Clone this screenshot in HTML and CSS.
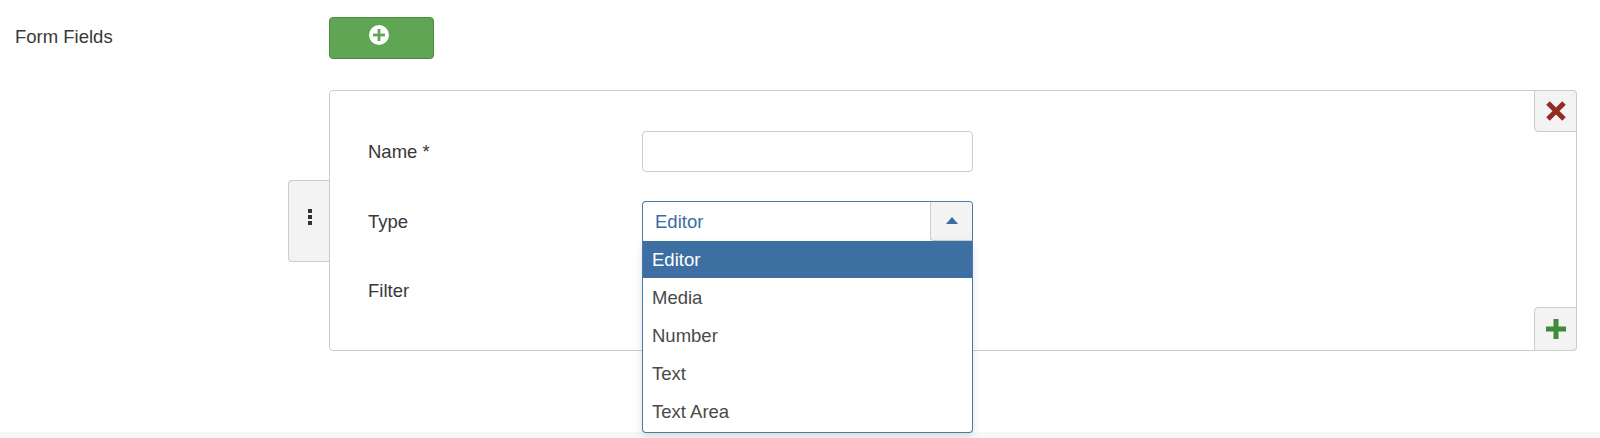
FILE: index.html
```html
<!DOCTYPE html>
<html lang="en">
<head>
<meta charset="utf-8">
<title>Form Fields</title>
<link rel="stylesheet" href="styles.css">
</head>
<body>
<div class="page">
  <div class="top-row">
    <div class="top-label">Form Fields</div>
    <button class="btn-add" type="button" aria-label="Add">
      <svg width="20" height="20" viewBox="0 0 20 20">
        <circle cx="10" cy="10" r="10" fill="#ffffff"/>
        <rect x="8.6" y="4" width="2.8" height="12" fill="#5fa553"/>
        <rect x="4" y="8.6" width="12" height="2.8" fill="#5fa553"/>
      </svg>
    </button>
  </div>

  <div class="card">
    <div class="handle">
      <span class="dots"><i></i><i></i><i></i></span>
    </div>

    <div class="form-row">
      <div class="form-label">Name *</div>
      <div class="control"><div class="input"></div></div>
    </div>

    <div class="form-row">
      <div class="form-label">Type</div>
      <div class="control">
        <div class="select">
          <span class="select-value">Editor</span>
          <span class="select-toggle">
            <svg width="12" height="7" viewBox="0 0 12 7"><polygon points="0,7 6,0 12,7" fill="#3b6ca4"/></svg>
          </span>
          <ul class="dropdown">
            <li class="active">Editor</li>
            <li>Media</li>
            <li>Number</li>
            <li>Text</li>
            <li>Text Area</li>
          </ul>
        </div>
      </div>
    </div>

    <div class="form-row">
      <div class="form-label">Filter</div>
      <div class="control"></div>
    </div>

    <button class="corner-btn close-btn" type="button" aria-label="Remove">
      <svg width="22" height="22" viewBox="0 0 22 22">
        <path d="M3 3 L19 19 M19 3 L3 19" stroke="#942a25" stroke-width="5" stroke-linecap="butt"/>
      </svg>
    </button>
    <button class="corner-btn plus-btn" type="button" aria-label="Add">
      <svg width="20" height="20" viewBox="0 0 20 20">
        <rect x="7.5" y="0" width="5" height="20" fill="#3f8a3b"/>
        <rect x="0" y="7.5" width="20" height="5" fill="#3f8a3b"/>
      </svg>
    </button>
  </div>

  <div class="footer-strip"></div>
</div>
</body>
</html>
```

FILE: styles.css
```css
html, body {
  margin: 0;
  padding: 0;
  background: #ffffff;
}

body {
  font-family: "Liberation Sans", Arial, sans-serif;
  font-size: 18.5px;
  color: #383838;
  overflow: hidden;
}

.page {
  padding-top: 17px;
}

.top-row {
  display: flex;
  align-items: center;
  padding-left: 15px;
}

.top-label {
  width: 314px;
  margin-top: -2px;
}

.btn-add {
  width: 105px;
  height: 42px;
  padding: 0 0 6px 0;
  margin: 0;
  background: #5fa553;
  border: 1px solid #4a8b40;
  border-radius: 4px;
  display: flex;
  align-items: center;
  justify-content: center;
  cursor: pointer;
}

.btn-add svg {
  margin-left: -5px;
}

.card {
  position: relative;
  box-sizing: border-box;
  margin: 31px 0 0 329px;
  width: 1248px;
  height: 261px;
  border: 1px solid #cccccc;
  border-radius: 4px;
  padding: 40px 0 40px 38px;
  display: flex;
  flex-direction: column;
  gap: 29px;
}

.handle {
  position: absolute;
  left: -42px;
  top: 89px;
  width: 41px;
  height: 82px;
  box-sizing: border-box;
  background: #f3f3f3;
  border: 1px solid #cccccc;
  border-right: none;
  border-radius: 4px 0 0 4px;
  display: flex;
  align-items: center;
  justify-content: center;
}

.dots {
  display: flex;
  flex-direction: column;
  gap: 2px;
  margin-top: -8px;
  margin-left: 2px;
}

.dots i {
  display: block;
  width: 4px;
  height: 4px;
  background: #333333;
}

.form-row {
  display: flex;
  align-items: center;
  height: 41px;
}

.form-row:nth-child(3) {
  height: 40px;
}

.form-label {
  width: 274px;
  padding-top: 1px;
}

.control {
  width: 331px;
  height: 100%;
  position: relative;
}

.input {
  box-sizing: border-box;
  height: 41px;
  border: 1px solid #cccccc;
  border-radius: 4px;
  background: #ffffff;
}

.select {
  position: relative;
  box-sizing: border-box;
  height: 40px;
  border: 1px solid #4a79ae;
  border-bottom: none;
  border-radius: 4px 4px 0 0;
  display: flex;
  align-items: center;
  background: #ffffff;
  z-index: 2;
}

.select-value {
  flex: 1;
  padding-left: 12px;
  color: #3b6ca4;
  padding-top: 1px;
}

.select-toggle {
  box-sizing: border-box;
  width: 42px;
  height: 39px;
  align-self: flex-start;
  background: #f3f3f3;
  border-left: 1px solid #cccccc;
  border-bottom: 1px solid #cccccc;
  border-radius: 0 3px 0 4px;
  display: flex;
  align-items: center;
  justify-content: center;
  padding-bottom: 1px;
}

.dropdown {
  position: absolute;
  top: 100%;
  left: -1px;
  right: -1px;
  margin: 0;
  padding: 0 0 1px 0;
  list-style: none;
  background: #ffffff;
  border: 1px solid #4a79ae;
  border-top: none;
  border-radius: 0 0 4px 4px;
  box-shadow: 0 4px 8px rgba(0, 0, 0, 0.12);
}

.dropdown li {
  height: 38px;
  line-height: 38px;
  padding-left: 9px;
  color: #4a4a4a;
}

.dropdown li.active {
  background: #3e6fa2;
  color: #ffffff;
  height: 37px;
  line-height: 37px;
  margin-bottom: 1px;
}

.corner-btn {
  position: absolute;
  right: -1px;
  width: 43px;
  height: 42px;
  box-sizing: border-box;
  margin: 0;
  padding: 0;
  background: #f3f3f3;
  border: 1px solid #cccccc;
  display: flex;
  align-items: center;
  justify-content: center;
  cursor: pointer;
}

.close-btn {
  top: -1px;
  border-radius: 0 4px 0 4px;
}

.plus-btn {
  bottom: -1px;
  height: 44px;
  border-radius: 4px 0 4px 0;
}

.footer-strip {
  margin-top: 81px;
  height: 8px;
  background: linear-gradient(#f7f7f7, #f9f9f9);
}
```
